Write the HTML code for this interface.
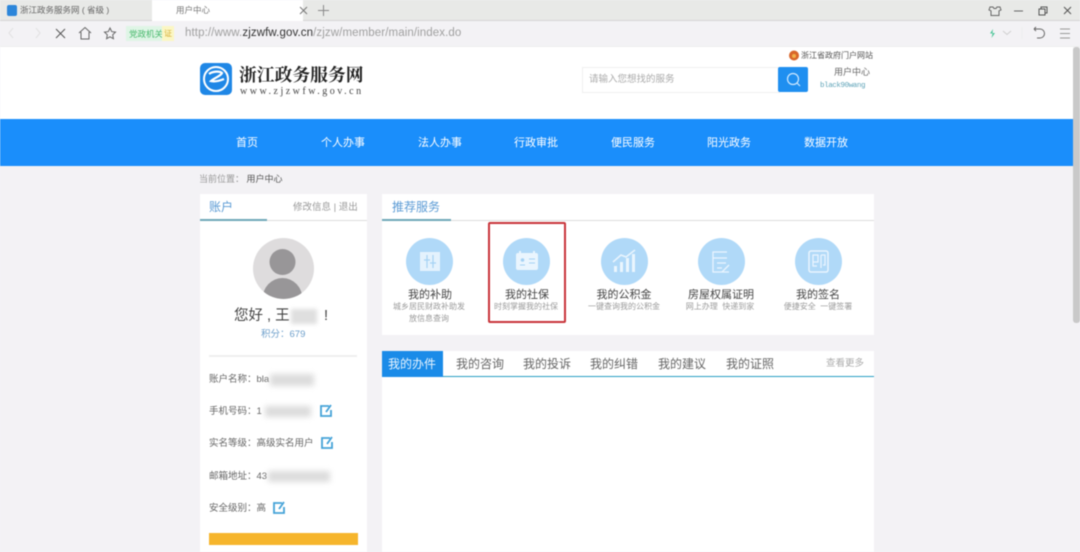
<!DOCTYPE html>
<html lang="zh-CN"><head><meta charset="utf-8"><title>用户中心</title>
<style>
html,body{margin:0;padding:0;width:1080px;height:552px;overflow:hidden;background:#f3f2f5}
body{font-family:"Liberation Sans","Noto Sans CJK SC",sans-serif;position:relative}
#w{position:absolute;left:0;top:0;width:1080px;height:552px;overflow:hidden;background:#f3f2f5;filter:blur(.45px)}
.a{position:absolute;white-space:nowrap}
.nav{position:absolute;top:135px;font-size:11px;line-height:16px;color:#fff;width:60px;text-align:center}
.circle{position:absolute;top:238px;width:47px;height:47px;border-radius:50%;background:#b0d9f8}
.st{position:absolute;top:288px;font-size:11px;line-height:14px;color:#444;text-align:center;width:90px}
.ss{position:absolute;font-size:8px;line-height:12px;color:#9a9a9a;text-align:center;width:90px;white-space:nowrap}
.lab{position:absolute;left:209px;font-size:9.5px;line-height:14px;color:#666;white-space:nowrap}
.tab{position:absolute;top:356px;font-size:12px;line-height:16px;color:#666;white-space:nowrap}
.bl{position:absolute;background:#dcdcdc;filter:blur(3px)}
svg{position:absolute;overflow:visible}
</style></head><body><div id="w">

<!-- browser chrome -->
<div class="a" style="left:0;top:0;width:1080px;height:21px;background:#e8e9e7"></div>
<div class="a" style="left:0;top:20px;width:1080px;height:1px;background:#d5d5d5"></div>
<div class="a" style="left:152px;top:0;width:151px;height:21px;background:#fff"></div>
<div class="a" style="left:7px;top:5px;width:10px;height:11px;background:#2c86da;border-radius:2px"></div>
<div class="a" style="left:20px;top:4px;font-size:8.5px;line-height:12px;color:#666">浙江政务服务网 ( 省级 )</div>
<div class="a" style="left:176px;top:4px;font-size:8.5px;line-height:12px;color:#777">用户中心</div>
<svg style="left:0;top:0" width="1080" height="46" fill="none" stroke="#666" stroke-width="1">
<path d="M300 7l7 7M307 7l-7 7" stroke="#777"/>
<path d="M318 10.500h11M323.500 5v11" stroke="#888"/>
<path d="M13 28l-4 5 4 5M36 28l4 5-4 5" stroke="#e0e0e0"/>
<path d="M56 29l9 9M65 29l-9 9" stroke="#555"/>
<path d="M79 33l6-5.500 6 5.500M81 32v7h8v-7" stroke="#666"/>
<path d="M110 28l1.700 3.600 3.800.5-2.800 2.700.7 3.900-3.400-1.900-3.400 1.900.7-3.900-2.800-2.700 3.800-.5z" stroke="#666"/>
<path d="M990 7h3l1 1.500h2l1-1.500h3l1 3-2 .8v4.700h-8v-4.700l-2-.8z" stroke="#666"/>
<path d="M1014 11h9" stroke="#666"/>
<path d="M1039 9h6v6h-6zM1041 9V7h6v6h-2" stroke="#555"/>
<path d="M1064 7l7 7M1071 7l-7 7" stroke="#555"/>
<path d="M1003 31l4 3.500 4-3.500" stroke="#cfcfcf"/>
<path d="M1022 27v12" stroke="#eee"/>
<path d="M1034 29h6a4 4 0 0 1 0 9h-3M1034 29l2-2M1034 29l2 2" stroke="#666"/>
<path d="M1060 29h10M1060 33.500h10M1060 38h10" stroke="#999"/>
<path d="M993 29l-3 4.500h2.500l-1 4.500 3.500-5h-2.500z" fill="#4fc69a" stroke="none"/>
</svg>
<div class="a" style="left:126px;top:26px;width:36px;height:15px;background:#dff5e6"></div>
<div class="a" style="left:129px;top:27px;font-size:8.500px;line-height:14px;color:#48b96c">党政机关</div>
<div class="a" style="left:162px;top:26px;width:12px;height:15px;background:#fbf6c4;font-size:8px;line-height:15px;text-align:center;color:#d8b23c">证</div>
<div class="a" style="left:185px;top:25px;font-size:11.500px;line-height:17px;color:#a0a0a0;letter-spacing:.1px">http://www.<span style="color:#333">zjzwfw.gov.cn</span>/zjzw/member/main/index.do</div>
<div class="a" style="left:0;top:46px;width:1080px;height:1px;background:#eee"></div>

<!-- header -->
<div class="a" style="left:0;top:47px;width:1073px;height:72px;background:#fff"></div>
<svg style="left:200px;top:63px" width="32" height="32">
<rect width="32" height="32" rx="5" fill="#1f87e6"/>
<circle cx="16" cy="16" r="12" fill="none" stroke="#fff" stroke-width="2"/>
<path d="M9 11c4-3 11-3 13-1-1 3-8 5-11 8 4 1 8 0 13-2" fill="none" stroke="#fff" stroke-width="2.200"/>
</svg>
<div class="a" style="left:239px;top:64px;font-family:'Noto Serif CJK SC','Liberation Serif',serif;font-weight:700;font-size:17.800px;line-height:22px;color:#222">浙江政务服务网</div>
<div class="a" style="left:240px;top:85px;font-family:'Liberation Serif',serif;font-size:10px;line-height:13px;letter-spacing:2.500px;color:#444">www.zjzwfw.gov.cn</div>
<div class="a" style="left:582px;top:67px;width:197px;height:24px;border:1px solid #efefef;border-right:0"></div>
<div class="a" style="left:589px;top:73px;font-size:9.500px;line-height:14px;color:#aaa">请输入您想找的服务</div>
<div class="a" style="left:778px;top:67px;width:30px;height:25px;background:#1f8ff0;border-radius:2px"></div>
<svg style="left:778px;top:67px" width="30" height="25" fill="none" stroke="#cfe9ff" stroke-width="1.200"><circle cx="15" cy="12" r="5.500"/><path d="M19 16l3 3"/></svg>
<svg style="left:788px;top:49px" width="12" height="12"><circle cx="6" cy="6.500" r="5" fill="#d9662a"/><circle cx="6" cy="7" r="2" fill="#f2b04a"/></svg>
<div class="a" style="left:801px;top:49px;font-size:8px;line-height:13px;color:#555">浙江省政府门户网站</div>
<div class="a" style="left:834px;top:66px;font-size:9px;line-height:13px;color:#666">用户中心</div>
<div class="a" style="left:820px;top:80px;font-family:'Liberation Mono',monospace;font-size:7.500px;line-height:12px;color:#5ea3b8;letter-spacing:-.4px">black90wang</div>

<!-- nav -->
<div class="a" style="left:0;top:119px;width:1073px;height:47px;background:#1a8efb"></div>
<div class="nav" style="left:217px">首页</div>
<div class="nav" style="left:313px">个人办事</div>
<div class="nav" style="left:410px">法人办事</div>
<div class="nav" style="left:506px">行政审批</div>
<div class="nav" style="left:603px">便民服务</div>
<div class="nav" style="left:699px">阳光政务</div>
<div class="nav" style="left:796px">数据开放</div>

<div class="a" style="left:199px;top:173px;font-size:9px;line-height:13px;color:#999">当前位置： <span style="color:#555">用户中心</span></div>

<!-- left panel -->
<div class="a" style="left:200px;top:194px;width:167px;height:358px;background:#fff"></div>
<div class="a" style="left:200px;top:220px;width:167px;height:1px;background:#ddd"></div>
<div class="a" style="left:200px;top:219px;width:67px;height:2px;background:#6fa8b8"></div>
<div class="a" style="left:209px;top:199px;font-size:12px;line-height:17px;color:#5b9bd5">账户</div>
<div class="a" style="left:293px;top:201px;font-size:9.500px;line-height:13px;color:#999">修改信息 | 退出</div>
<svg style="left:253px;top:238px" width="61" height="61">
<defs><clipPath id="av"><circle cx="30.500" cy="30.500" r="30.500"/></clipPath></defs>
<circle cx="30.500" cy="30.500" r="30.500" fill="#dedcdd"/>
<g clip-path="url(#av)" fill="#989698"><circle cx="29.500" cy="24" r="13"/><ellipse cx="29.500" cy="61" rx="20" ry="21"/></g>
</svg>
<div class="a" style="left:234px;top:306px;font-size:14.500px;line-height:20px;color:#444">您好 , 王</div>
<div class="a" style="left:291px;top:309px;width:26px;height:15px;background:#dfdfdf;filter:blur(2px)"></div>
<div class="a" style="left:324px;top:306px;font-size:14.500px;line-height:20px;color:#444">!</div>
<div class="a" style="left:261px;top:328px;font-size:9.500px;line-height:13px;color:#6d9fcb">积分：679</div>
<div class="a" style="left:209px;top:355px;width:148px;height:2px;background:#efefef"></div>
<div class="lab" style="top:373px">账户名称：bla</div>
<div class="bl" style="left:270px;top:374px;width:44px;height:12px"></div>
<div class="lab" style="top:405px">手机号码：1</div>
<div class="bl" style="left:265px;top:406px;width:46px;height:11px"></div>
<div class="lab" style="top:437px">实名等级：高级实名用户</div>
<div class="lab" style="top:470px">邮箱地址：43</div>
<div class="bl" style="left:268px;top:471px;width:62px;height:11px"></div>
<div class="lab" style="top:502px">安全级别：高</div>
<svg style="left:0;top:0" width="400" height="552" fill="none" stroke="#45a3d8" stroke-width="1.800">
<path d="M329 406h-8v10h10v-6M326 412l5-7"/>
<path d="M330 438h-8v10h10v-6M327 444l5-7"/>
<path d="M282 503h-8v10h10v-6M279 509l5-7"/>
</svg>
<div class="a" style="left:209px;top:533px;width:149px;height:12px;background:#f6b52c"></div>

<!-- recommended -->
<div class="a" style="left:382px;top:194px;width:492px;height:141px;background:#fff"></div>
<div class="a" style="left:382px;top:220px;width:492px;height:1px;background:#ddd"></div>
<div class="a" style="left:382px;top:219px;width:69px;height:2px;background:#6fa8b8"></div>
<div class="a" style="left:392px;top:199px;font-size:12px;line-height:17px;color:#5b9bd5">推荐服务</div>

<div class="circle" style="left:406px"></div>
<div class="circle" style="left:503px"></div>
<div class="circle" style="left:601px"></div>
<div class="circle" style="left:698px"></div>
<div class="circle" style="left:795px"></div>
<svg style="left:0;top:0" width="1080" height="300" fill="none" stroke="#eaf5fe">
<rect x="420" y="252" width="20" height="19" fill="#e4f2fd" stroke="none"/>
<path d="M427 255v13M433 255v13M424 260h6M430 263h6" stroke="#a5d2f4" stroke-width="1.200"/>
<rect x="516" y="253" width="22" height="17" rx="2" fill="#eaf5fe" stroke="none"/>
<path d="M520 251v3M534 251v3" stroke-width="2"/>
<path d="M529 259h6M529 263h6M520 265h5" stroke="#a5d2f4"/>
<circle cx="522.500" cy="260" r="1.800" fill="#a5d2f4" stroke="none"/>
<path d="M614 272v-6h3v6zM620 272v-10h3v10zM626 272v-14h3v14zM632 272v-18h3v18z" fill="#eaf5fe" stroke="none"/>
<path d="M613 262l8-7 5 2 9-7" stroke-width="1.500"/>
<path d="M727 252h-14v20h16M713 258h14M717 263h9M717 268h5" stroke-width="1.300"/>
<path d="M722 272l7-7" stroke-width="1.300"/>
<rect x="809" y="251" width="19" height="21" rx="2" stroke-width="1.500"/>
<path d="M813 255h5v7h-5zM813 255v11h4M821 255h4v10h-2M821 255v13" stroke-width="1.300"/>
</svg>

<div class="st" style="left:385px">我的补助</div>
<div class="ss" style="left:384px;top:301px">城乡居民财政补助发<br>放信息查询</div>
<div class="st" style="left:482px">我的社保</div>
<div class="ss" style="left:481px;top:301px">时刻掌握我的社保</div>
<div class="st" style="left:579px">我的公积金</div>
<div class="ss" style="left:579px;top:301px">一键查询我的公积金</div>
<div class="st" style="left:676px">房屋权属证明</div>
<div class="ss" style="left:675px;top:301px">网上办理&nbsp;&nbsp;快递到家</div>
<div class="st" style="left:773px">我的签名</div>
<div class="ss" style="left:773px;top:301px">便捷安全&nbsp;&nbsp;一键签署</div>

<div class="a" style="left:488px;top:222px;width:78px;height:101px;border:2px solid #c8343a;border-radius:2px;box-sizing:border-box"></div>

<!-- tabs -->
<div class="a" style="left:382px;top:351px;width:492px;height:201px;background:#fff"></div>
<div class="a" style="left:382px;top:376px;width:492px;height:1px;background:#2a9fc4"></div>
<div class="a" style="left:382px;top:351px;width:61px;height:26px;background:#1a8be8"></div>
<div class="tab" style="left:388px;color:#e9f5ff">我的办件</div>
<div class="tab" style="left:456px">我的咨询</div>
<div class="tab" style="left:523px">我的投诉</div>
<div class="tab" style="left:590px">我的纠错</div>
<div class="tab" style="left:658px">我的建议</div>
<div class="tab" style="left:726px">我的证照</div>
<div class="a" style="left:826px;top:357px;font-size:9.500px;line-height:13px;color:#aaa">查看更多</div>

<!-- scrollbar -->
<div class="a" style="left:1073px;top:47px;width:7px;height:505px;background:#f3f2f5"></div>
<div class="a" style="left:1073px;top:47px;width:7px;height:276px;background:#c9c9c9;border-radius:3px"></div>
</div></body></html>
